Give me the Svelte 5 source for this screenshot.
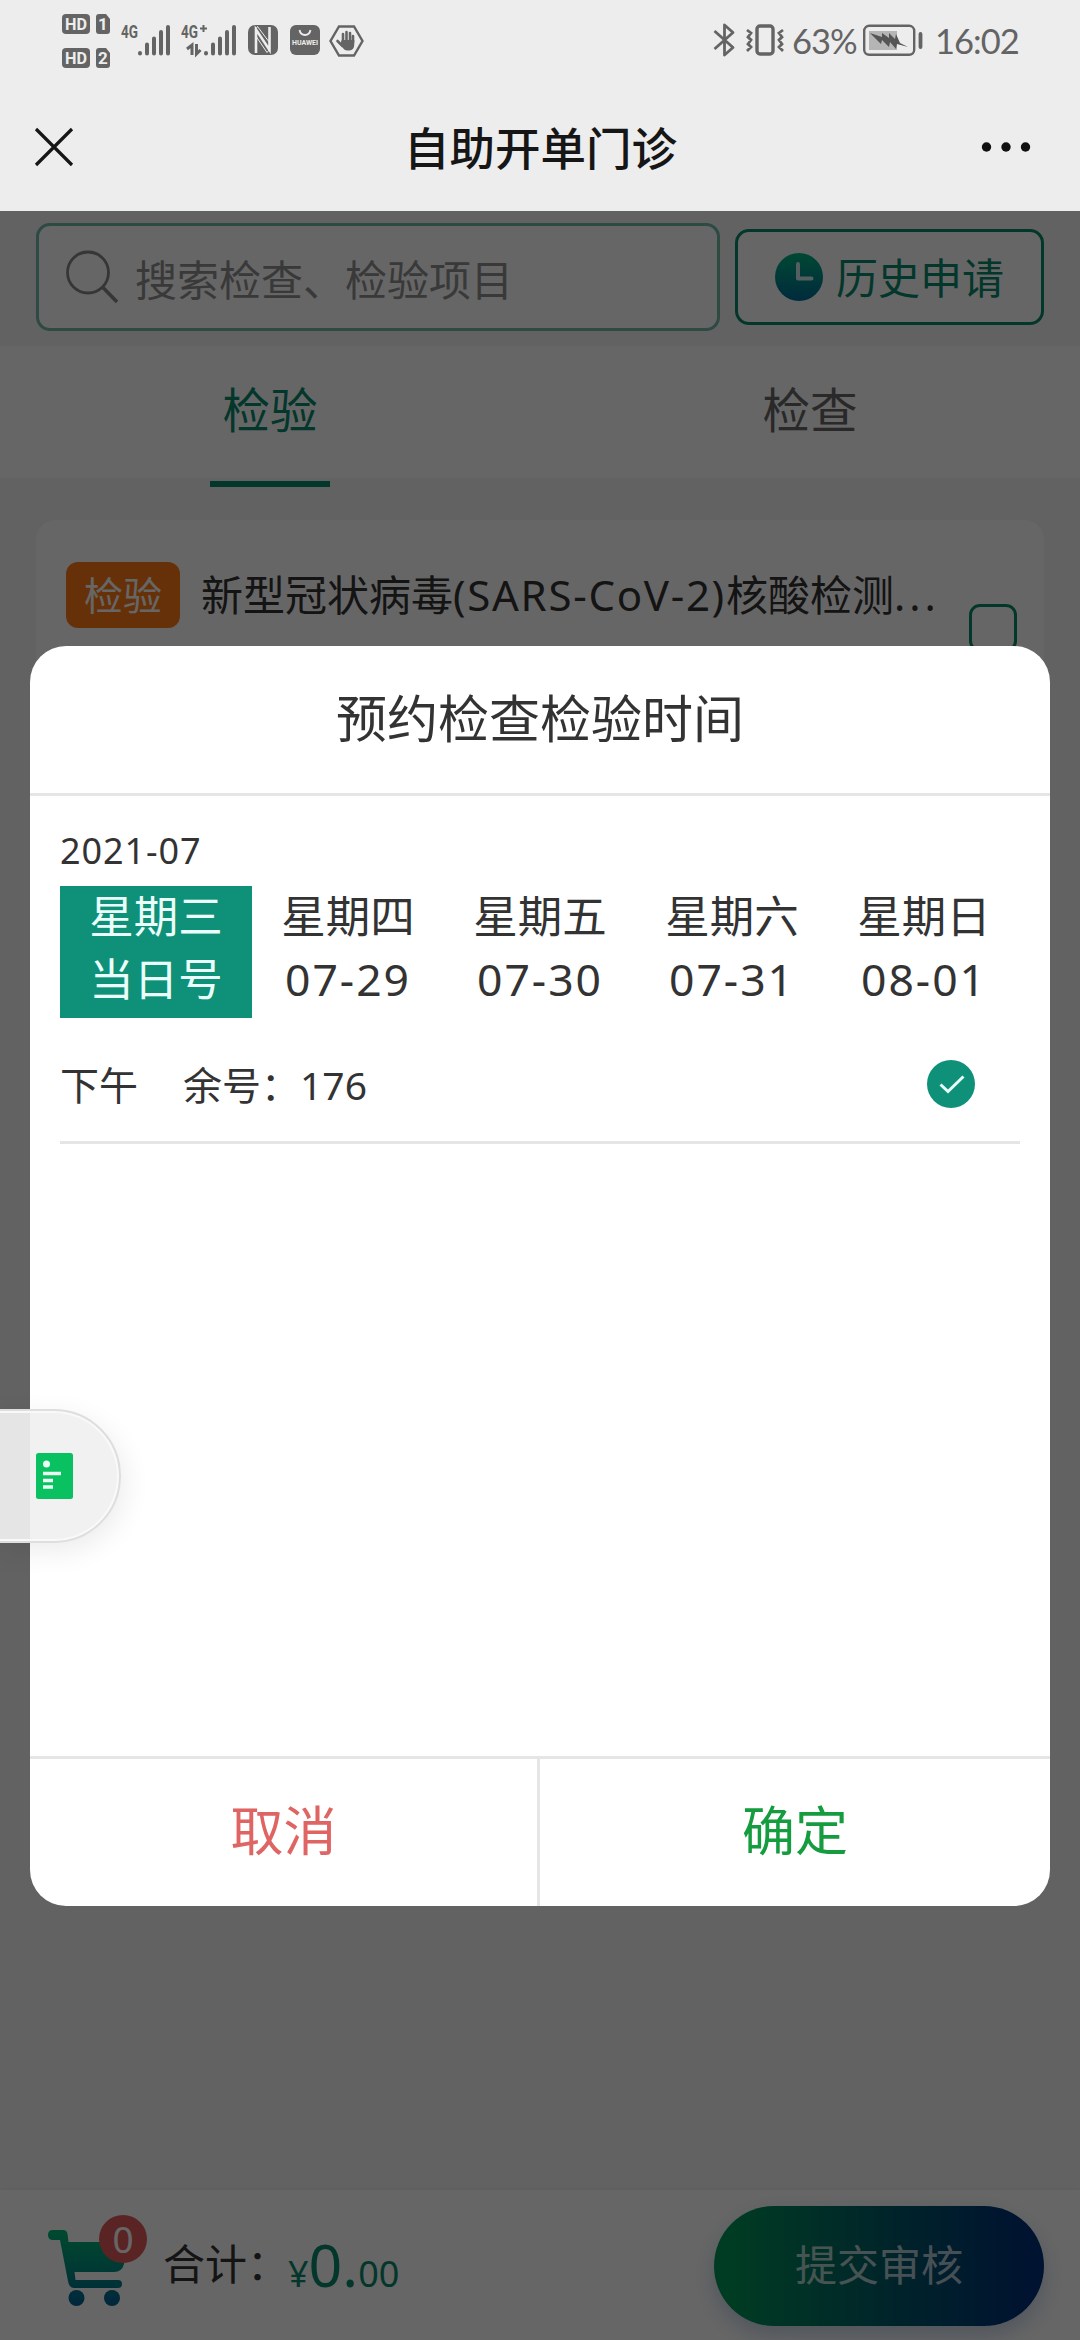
<script lang="ts">
  interface Day {
    week: string;
    date: string;
  }

  const tabs = ['检验', '检查'];
  const days: Day[] = [
    { week: '星期三', date: '当日号' },
    { week: '星期四', date: '07-29' },
    { week: '星期五', date: '07-30' },
    { week: '星期六', date: '07-31' },
    { week: '星期日', date: '08-01' },
  ];

  let activeTab = $state(0);
  let activeDay = $state(0);
  let checked = $state(true);
  let open = $state(true);
</script>

{#snippet hd(n: number)}
  <svg width="48" height="20" viewBox="0 0 48 20">
    <rect width="28" height="20" rx="4" fill="#646464" />
    <text x="14" y="16" text-anchor="middle" class="st" font-size="17" fill="#ededed" textLength="22" lengthAdjust="spacingAndGlyphs">HD</text>
    <path d="M37 0h7l4 5v12q0 3-3 3h-8q-3 0-3-3V3q0-3 3-3z" fill="#646464" />
    <text x="41" y="16" text-anchor="middle" class="st" font-size="17" fill="#ededed">{n}</text>
  </svg>
{/snippet}

<div class="phone">
  <header>
    <div class="status">
      <div class="hds">
        {@render hd(1)}
        {@render hd(2)}
      </div>
      <svg class="sig1" width="50" height="32" viewBox="0 0 50 32">
        <text x="0" y="14" class="st" font-size="18" fill="#646464" textLength="17" lengthAdjust="spacingAndGlyphs">4G</text>
        <path d="M19 29.5v-.5M26 29.5V20.5M33 29.5V14.5M40 29.5V8M47 29.5V3" class="bars" />
      </svg>
      <svg class="sig2" width="56" height="32" viewBox="0 0 56 32">
        <text x="0" y="14" class="st" font-size="18" fill="#646464" textLength="17" lengthAdjust="spacingAndGlyphs">4G</text>
        <path d="M19 4.5h7M22.5 1v7" stroke="#646464" stroke-width="2" fill="none" />
        <path d="M6 25l5-4v10M15.5 20v10l4-4" stroke="#646464" stroke-width="3" fill="none" />
        <path d="M25 29.5v-.5M32 29.5V20.5M39 29.5V14.5M46 29.5V8M53 29.5V3" class="bars" />
      </svg>
      <svg class="nfc" width="30" height="30" viewBox="0 0 30 30">
        <rect width="30" height="30" rx="7" fill="#646464" />
        <path d="M8 28V4.5L21.500 25V2" fill="none" stroke="#ededed" stroke-width="2.6" />
        <path d="M7.500 4.500l2-3 12 16M8.500 12L19 27.500l2.500-3" fill="none" stroke="#ededed" stroke-width="1" />
      </svg>
      <svg class="huawei" width="30" height="30" viewBox="0 0 30 30">
        <rect width="30" height="30" rx="6" fill="#646464" />
        <path d="M9.5 5q1 5 5.5 5t5.5-5" fill="none" stroke="#ededed" stroke-width="1.8" />
        <text x="15" y="20" text-anchor="middle" class="st" font-size="7" fill="#ededed" textLength="26" lengthAdjust="spacingAndGlyphs">HUAWEI</text>
      </svg>
      <svg class="hex" width="35" height="32" viewBox="0 0 35 32">
        <path d="M10 1.5h15l8.5 14.5L25 30.5H10L1.5 16z" fill="none" stroke="#646464" stroke-width="2.4" />
        <path d="M14 16V9M17.5 15V7M21 16V8M24 17v-6M8.5 16l5 5" stroke="#646464" stroke-width="2.6" stroke-linecap="round" />
        <path d="M12.7 15h12.6v4q0 6-5 6.5h-2q-3 0-5-3.5l-2-3z" fill="#646464" />
      </svg>
      <svg class="bt" width="22" height="36" viewBox="0 0 22 36">
        <path d="M1.5 9L20 25.5L11.5 33V3L20 10.5L1.5 27" fill="none" stroke="#646464" stroke-width="2.8" stroke-linejoin="round" />
      </svg>
      <svg class="vib" width="38" height="32" viewBox="0 0 38 32">
        <rect x="11" y="2" width="16" height="28" rx="3" fill="none" stroke="#646464" stroke-width="3.4" />
        <path d="M1 6l4 3-3 4 3 3-3 4 3 3-4 4M37 6l-4 3 3 4-3 3 3 4-3 3 4 4" fill="none" stroke="#646464" stroke-width="2.8" />
      </svg>
      <span class="pct">63%</span>
      <svg class="bat" width="60" height="32" viewBox="0 0 60 32">
        <rect x="1.2" y="1.8" width="50" height="29" rx="5" fill="none" stroke="#646464" stroke-width="2.4" />
        <rect x="6" y="7" width="28" height="19" fill="#b5b5b5" />
        <path d="M7 9l12 4V9l7 5V9l6 6 1-5 4 9 8 4-11-3-1 5-6-7-1 5-7-7-1 4z" fill="#555" />
        <path d="M57.5 10v13" stroke="#646464" stroke-width="3.8" stroke-linecap="round" />
      </svg>
      <span class="time">16:02</span>
    </div>
    <div class="nav">
      <svg width="40" height="40" viewBox="0 0 40 40">
        <path d="M2 2l36 36M38 2L2 38" stroke="#161616" stroke-width="3.2" />
      </svg>
      <h1>自助开单门诊</h1>
      <svg width="50" height="12" viewBox="0 0 50 12" fill="#111">
        <circle cx="5.5" cy="6" r="4.7" />
        <circle cx="25" cy="6" r="4.7" />
        <circle cx="44.5" cy="6" r="4.7" />
      </svg>
    </div>
  </header>

  <main>
    <div class="search-row">
      <div class="search">
        <svg width="54" height="54" viewBox="0 0 54 54" fill="none" stroke="#888" stroke-width="2.8">
          <circle cx="22" cy="22.5" r="20.5" />
          <path d="M36.5 37l14.5 15" stroke-width="3.6" />
        </svg>
        <span>搜索检查、检验项目</span>
      </div>
      <button class="history">
        <svg width="48" height="48" viewBox="0 0 48 48">
          <defs>
            <linearGradient id="clock" x1="0" y1="0" x2="0" y2="1">
              <stop offset="0" stop-color="#00b482" />
              <stop offset="1" stop-color="#006b96" />
            </linearGradient>
          </defs>
          <circle cx="24" cy="24" r="24" fill="url(#clock)" />
          <path d="M23 11v14.5H36.5" fill="none" stroke="#d8eeee" stroke-width="4" stroke-linejoin="round" stroke-linecap="round" />
        </svg>
        <span>历史申请</span>
      </button>
    </div>

    <div class="tabs">
      {#each tabs as tab, i}
        <button class="tab" class:active={i === activeTab} onclick={() => (activeTab = i)}>{tab}</button>
      {/each}
    </div>

    <div class="card">
      <span class="tag">检验</span>
      <span class="name">新型冠状病毒<span class="latin">(SARS-CoV-2)</span>核酸检测<span class="dots">...</span></span>
      <span class="box"></span>
    </div>
  </main>

  <footer>
    <div class="cart">
      <svg width="82" height="76" viewBox="0 0 82 76">
        <defs>
          <linearGradient id="cart" gradientUnits="userSpaceOnUse" x1="0" y1="0" x2="0" y2="76">
            <stop offset="0" stop-color="#00b878" />
            <stop offset=".5" stop-color="#009080" />
            <stop offset="1" stop-color="#006098" />
          </linearGradient>
        </defs>
        <path d="M5 0H15Q19 0 19.5 4L20.5 12H80L76 34Q74 42 66 42H26.5L27.5 50H70Q74 50 74 54T70 58H26Q21 58 20 51L12 10H5Q0 10 0 5T5 0z" fill="url(#cart)" />
        <circle cx="28.5" cy="68" r="8" fill="url(#cart)" />
        <circle cx="64" cy="68" r="8" fill="url(#cart)" />
      </svg>
      <span class="badge">0</span>
    </div>
    <span class="total">合计：</span>
    <span class="price">¥<b>0.</b>00</span>
    <button class="submit">提交审核</button>
  </footer>

  {#if open}
    <div class="mask">
      <div class="dialog">
        <h2>预约检查检验时间</h2>
        <div class="content">
          <div class="month">2021-07</div>
          <div class="days">
            {#each days as day, i}
              <button class="day" class:active={i === activeDay} onclick={() => (activeDay = i)}>
                <span>{day.week}</span>
                <span class="date">{day.date}</span>
              </button>
            {/each}
          </div>
          <button class="slot" onclick={() => (checked = !checked)}>
            <span class="period">下午</span>
            <span>余号：176</span>
            {#if checked}
              <svg width="48" height="48" viewBox="0 0 48 48">
                <circle cx="24" cy="24" r="24" fill="#0f9179" />
                <path d="M13.5 24.5l7.5 7L36.5 16.5" fill="none" stroke="#e8fffa" stroke-width="3" />
              </svg>
            {/if}
          </button>
        </div>
        <div class="actions">
          <button class="cancel" onclick={() => (open = false)}>取消</button>
          <button class="confirm" onclick={() => (open = false)}>确定</button>
        </div>
      </div>
    </div>
  {/if}

  <div class="float">
    <svg width="37" height="46" viewBox="0 0 37 46">
      <rect width="37" height="46" rx="2.5" fill="#09c160" />
      <circle cx="10.5" cy="11" r="3.5" fill="#e9fff2" />
      <path d="M7 20.5h18M7 27.5h10M7 34h10" stroke="#e9fff2" stroke-width="3.6" />
    </svg>
  </div>
</div>

<style>
  :global(body) {
    margin: 0;
  }
  .phone {
    position: relative;
    display: flex;
    flex-direction: column;
    width: 1080px;
    height: 2340px;
    overflow: hidden;
    background: #f6f6f6;
    color: #333;
    font-family: "Noto Sans", "Noto Sans CJK SC", sans-serif;
  }
  button {
    margin: 0;
    padding: 0;
    border: 0;
    background: none;
    color: inherit;
    font: inherit;
  }
  svg {
    display: block;
    flex: none;
    overflow: visible;
  }

  header {
    height: 211px;
    background: #ededed;
  }
  .status {
    display: flex;
    align-items: flex-start;
    box-sizing: border-box;
    height: 82px;
    padding: 14px 0 0 62px;
    color: #646464;
    font-family: Lato, sans-serif;
    font-size: 34.5px;
    line-height: 36px;
  }
  .st {
    font-family: Roboto, sans-serif;
    font-weight: 700;
  }
  .hds {
    display: flex;
    flex-direction: column;
    gap: 14px;
  }
  .bars {
    stroke: #646464;
    stroke-width: 4;
    stroke-linecap: round;
  }
  .sig1 { margin: 10px 0 0 11px; }
  .sig2 { margin: 10px 0 0 10px; }
  .nfc { margin: 11px 0 0 11px; }
  .huawei { margin: 11px 0 0 12px; }
  .hex { margin: 11px 0 0 9px; }
  .bt { margin: 8px 0 0 349px; }
  .vib { margin: 10px 0 0 11px; }
  .pct {
    width: 70px;
    margin: 9px 0 0 8px;
    letter-spacing: -1px;
  }
  .bat { margin: 10px 0 0 1px; }
  .time {
    margin: 9px 0 0 12px;
    letter-spacing: -1px;
  }

  .nav {
    display: flex;
    align-items: center;
    justify-content: space-between;
    height: 129px;
    padding: 0 49px 0 34px;
  }
  h1 {
    margin: 2px 0 0 26px;
    color: #161616;
    font-size: 45.5px;
    font-weight: 500;
    line-height: 66px;
  }

  .search-row {
    display: flex;
    align-items: center;
    gap: 15px;
    box-sizing: border-box;
    height: 135px;
    padding: 0 36px;
  }
  .search {
    display: flex;
    align-items: center;
    gap: 15px;
    box-sizing: border-box;
    width: 684px;
    height: 108px;
    margin-bottom: 3px;
    padding-left: 27px;
    border: 3px solid #70b8a8;
    border-radius: 14px;
    background: #fff;
    color: #909090;
    font-size: 42px;
  }
  .search span {
    padding-top: 1px;
  }
  .history {
    display: flex;
    align-items: center;
    justify-content: center;
    gap: 13px;
    box-sizing: border-box;
    width: 309px;
    height: 96px;
    margin-bottom: 3px;
    border: 3px solid #0c8a6c;
    border-radius: 14px;
    background: #fff;
    color: #0c8a6c;
    font-size: 42px;
  }
  .history span {
    margin-top: -4px;
  }

  .tabs {
    display: flex;
    height: 132px;
    background: #fff;
  }
  .tab {
    position: relative;
    flex: 1;
    padding-bottom: 9px;
    color: #666;
    font-size: 47.5px;
  }
  .tab.active {
    color: #0c8a6c;
  }
  .tab.active::after {
    content: "";
    position: absolute;
    bottom: -9px;
    left: 210px;
    width: 120px;
    height: 6px;
    background: #0c8a6c;
  }

  .card {
    display: flex;
    align-items: flex-start;
    box-sizing: border-box;
    height: 320px;
    margin: 42px 36px 0;
    padding: 42px 27px 0 30px;
    border-radius: 20px;
    background: #fff;
  }
  .tag {
    width: 114px;
    height: 66px;
    border-radius: 12px;
    background: #ff7a14;
    color: #fff;
    font-size: 39px;
    line-height: 66px;
    text-align: center;
  }
  .name {
    width: 740px;
    margin-left: 21px;
    font-size: 42px;
    line-height: 66px;
    white-space: nowrap;
  }
  .latin {
    letter-spacing: 1.7px;
  }
  .dots {
    letter-spacing: 4px;
  }
  .box {
    box-sizing: border-box;
    width: 48px;
    height: 48px;
    margin: 42px 0 0 auto;
    border: 3px solid #0c8a6c;
    border-radius: 11px;
  }

  footer {
    display: flex;
    align-items: flex-start;
    box-sizing: border-box;
    height: 150px;
    margin-top: auto;
    padding: 16px 36px 0 48px;
    background: #fff;
    box-shadow: 0 -1px 4px rgba(0, 0, 0, 0.06);
    font-size: 42px;
  }
  .cart {
    position: relative;
    width: 115px;
    padding-top: 24px;
  }
  .badge {
    position: absolute;
    top: 9px;
    left: 51px;
    width: 48px;
    height: 48px;
    border-radius: 50%;
    background: #e05a5a;
    color: #fff;
    font-size: 37px;
    line-height: 48px;
    text-align: center;
  }
  .total {
    width: 125px;
    line-height: 115px;
    white-space: nowrap;
  }
  .price {
    color: #0c8a6c;
    font-size: 36px;
    line-height: 117px;
  }
  .price b {
    font-size: 59px;
    font-weight: 400;
  }
  .submit {
    width: 330px;
    height: 120px;
    margin-left: auto;
    padding-bottom: 8px;
    border-radius: 60px;
    background: linear-gradient(90deg, #009558 5%, #005e68 50%, #003079 95%);
    box-shadow: 0 10px 22px rgba(0, 70, 150, 0.22);
    color: rgba(255, 255, 255, 0.7);
  }

  .mask {
    position: absolute;
    inset: 211px 0 0;
    background: rgba(0, 0, 0, 0.6);
  }
  .dialog {
    display: flex;
    flex-direction: column;
    height: 1260px;
    margin: 435px 30px 0;
    border-radius: 36px;
    background: #fff;
  }
  h2 {
    height: 147px;
    margin: 0;
    border-bottom: 3px solid #e5e5e5;
    font-size: 51px;
    font-weight: 400;
    line-height: 144px;
    text-align: center;
  }
  .content {
    flex: 1;
    padding: 27px 30px 0;
  }
  .month {
    height: 63px;
    font-size: 36px;
    line-height: 55px;
    letter-spacing: 0.9px;
  }
  .days {
    display: flex;
  }
  .day {
    display: flex;
    flex-direction: column;
    width: 192px;
    height: 132px;
    font-size: 44.5px;
    line-height: 63px;
  }
  .day span {
    width: 100%;
    margin-top: -2px;
    text-align: center;
  }
  .day .date {
    margin-top: 0;
  }
  .day:not(.active) .date {
    letter-spacing: 2px;
  }
  .day.active {
    background: #0f9179;
    color: #eafff9;
  }
  .slot {
    display: flex;
    align-items: center;
    box-sizing: border-box;
    width: 100%;
    height: 126px;
    padding: 8px 45px 0 0;
    border-bottom: 3px solid #e5e5e5;
    font-size: 39px;
  }
  .slot span {
    margin-top: -2px;
  }
  .period {
    margin-right: 45px;
  }
  .slot svg {
    margin-left: auto;
  }
  .actions {
    display: flex;
    height: 147px;
    border-top: 3px solid #e5e5e5;
    font-size: 53px;
  }
  .actions button {
    box-sizing: border-box;
    width: 510px;
    padding-bottom: 8px;
  }
  .actions .cancel {
    border-right: 3px solid #e5e5e5;
    color: #df6464;
  }
  .actions .confirm {
    color: #159c3f;
  }

  .float {
    position: absolute;
    top: 1409px;
    left: -6px;
    display: flex;
    align-items: center;
    box-sizing: border-box;
    width: 127px;
    height: 134px;
    padding-left: 40px;
    border: 2px solid #dedede;
    border-radius: 0 67px 67px 0;
    background: rgba(240, 240, 240, 0.92);
    box-shadow: inset 0 0 0 2px #f9f9f9, 4px 8px 28px rgba(0, 0, 0, 0.08);
  }
</style>
